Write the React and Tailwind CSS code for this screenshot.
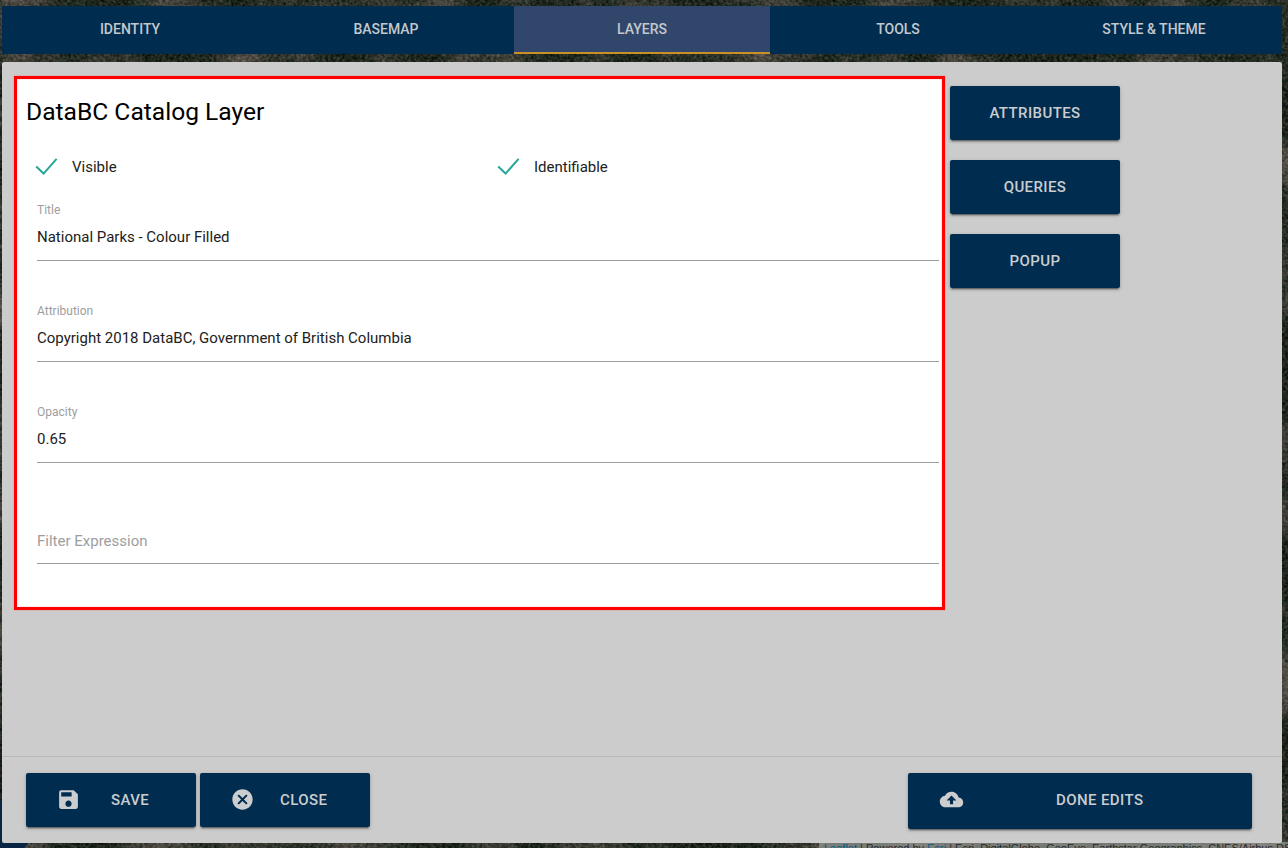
import React from "react";
import { IoMdSave, IoMdCloseCircle, IoMdCloudUpload } from "react-icons/io";

const TABS = ["IDENTITY", "BASEMAP", "LAYERS", "TOOLS", "STYLE & THEME"];

const BUTTON =
  "flex items-center rounded-[2px] bg-[#002c50] text-[15px] font-medium tracking-[0.4px] text-[#cbcdce] shadow-[0_2px_2px_0_rgba(0,0,0,0.18),0_1px_4px_0_rgba(0,0,0,0.16),0_3px_1px_-2px_rgba(0,0,0,0.3)]";

function Imagery() {
  return (
    <svg className="absolute inset-0 h-full w-full" aria-hidden="true">
      <defs>
        <filter id="terrain" x="0" y="0" width="100%" height="100%" colorInterpolationFilters="sRGB">
          <feTurbulence type="fractalNoise" baseFrequency="0.35" numOctaves="3" seed="6" result="fine" />
          <feColorMatrix
            in="fine"
            type="matrix"
            values="0.36 0 0 0 -0.06  0.32 0.05 0 0 -0.04  0.3 0 0 0 -0.04  0 0 0 0 1"
            result="grain"
          />
          <feTurbulence type="fractalNoise" baseFrequency="0.015" numOctaves="4" seed="11" result="broad" />
          <feColorMatrix
            in="broad"
            type="matrix"
            values="0.6 0 0 0 -0.26  0.44 0 0 0 -0.18  0.46 0 0 0 -0.19  0 0 0 0 1"
            result="patches"
          />
          <feComposite in="grain" in2="patches" operator="arithmetic" k1="0" k2="1" k3="1" k4="0" />
        </filter>
      </defs>
      <rect width="100%" height="100%" filter="url(#terrain)" />
      <path d="M0 801h2v42h27l-5 5H0z" fill="#0a2446" />
    </svg>
  );
}

function Attribution() {
  return (
    <div className="absolute left-[819px] top-[842px] h-[6px] w-[469px] overflow-hidden whitespace-nowrap bg-[#8d908b]/80 pl-[5px] font-['Liberation_Sans',sans-serif] text-[11px] leading-[12px] text-[#292929]">
      <span className="text-[#005f85]">Leaflet</span> | Powered by <span className="text-[#005f85]">Esri</span> | Esri,
      DigitalGlobe, GeoEye, Earthstar Geographics, CNES/Airbus DS
    </div>
  );
}

function Check({ label }) {
  return (
    <label className="flex w-[462px] shrink-0 items-center">
      <svg className="h-[22px] w-[24px]" viewBox="0 0 24 22" fill="none" stroke="#26a69a" strokeWidth="2">
        <path d="M2.2 10.6L9.6 17.6L22.6 2.8" />
      </svg>
      <span className="ml-[14px] text-[15px] leading-[22px] text-[#212121]">{label}</span>
    </label>
  );
}

function Field({ label, value }) {
  return (
    <div className="h-[101px]">
      <div className="flex h-[59px] flex-col border-b border-[#9e9e9e]">
        <span className={value ? "h-[17px] text-[12px] leading-[17px] text-[#9e9e9e]" : "h-[17px]"}>
          {value ? label : ""}
        </span>
        <span
          className={
            value
              ? "mt-[7px] text-[15px] leading-[22px] text-[#212121]"
              : "mt-[8px] text-[15px] leading-[22px] text-[#9e9e9e]"
          }
        >
          {value || label}
        </span>
      </div>
    </div>
  );
}

export default function App() {
  return (
    <div className="relative h-[848px] w-[1288px] overflow-hidden bg-[#20261d] font-['Roboto',sans-serif]">
      <Imagery />
      <Attribution />
      <div className="relative flex w-[1282px] flex-col gap-2 pl-[2px] pt-[6px]">
        <nav className="flex h-12">
          {TABS.map((tab) => (
            <div
              key={tab}
              className={
                tab === "LAYERS"
                  ? "flex h-12 w-64 justify-center border-b-2 border-[#c99026] bg-[#30476b] text-[14px] font-medium leading-[47px] text-[#c4c8cc]"
                  : "flex h-12 w-64 justify-center bg-[#002c50] text-[14px] font-medium leading-[47px] text-[#c4c8cc]"
              }
            >
              {tab}
            </div>
          ))}
        </nav>

        <main className="flex h-[781px] flex-col rounded-[2px] bg-[#cccccc]">
          <div className="flex h-[694px] items-start pl-3 pt-[14px]">
            <section className="h-[534px] w-[931px] border-[3px] border-[#ff0000] bg-white pl-[9px] pt-[17px] shadow-[0_0_1px_0_rgba(255,0,0,0.6),inset_0_0_1px_0_rgba(255,0,0,0.7)]">
              <h1 className="text-[24.6px] leading-[32px] text-black">DataBC Catalog Layer</h1>
              <div className="mt-[28px] flex pl-[8px]">
                <Check label="Visible" />
                <Check label="Identifiable" />
              </div>
              <div className="ml-[11px] mt-[24px] w-[902px]">
                <Field label="Title" value="National Parks - Colour Filled" />
                <Field label="Attribution" value="Copyright 2018 DataBC, Government of British Columbia" />
                <Field label="Opacity" value="0.65" />
                <Field label="Filter Expression" />
              </div>
            </section>
            <aside className="ml-[5px] mt-[10px] flex flex-col gap-5">
              {["ATTRIBUTES", "QUERIES", "POPUP"].map((name) => (
                <button key={name} className={`${BUTTON} h-[54px] w-[170px] justify-center`}>
                  {name}
                </button>
              ))}
            </aside>
          </div>

          <footer className="flex h-[87px] items-start border-t border-[#b8b8b8] pl-6 pr-[30px] pt-4">
            <button className={`${BUTTON} h-[54px] w-[170px] pl-[29.5px]`}>
              <IoMdSave size={25} className="mb-px" />
              <span className="ml-[30.5px]">SAVE</span>
            </button>
            <button className={`${BUTTON} ml-1 h-[54px] w-[170px] pl-[29.5px]`}>
              <IoMdCloseCircle size={25} className="mb-px" />
              <span className="ml-[25.5px]">CLOSE</span>
            </button>
            <button className={`${BUTTON} ml-auto h-[56px] w-[344px] pb-[2px] pl-[30.5px]`}>
              <IoMdCloudUpload size={25} className="mb-px" />
              <span className="ml-[92.5px]">DONE EDITS</span>
            </button>
          </footer>
        </main>
      </div>
    </div>
  );
}
